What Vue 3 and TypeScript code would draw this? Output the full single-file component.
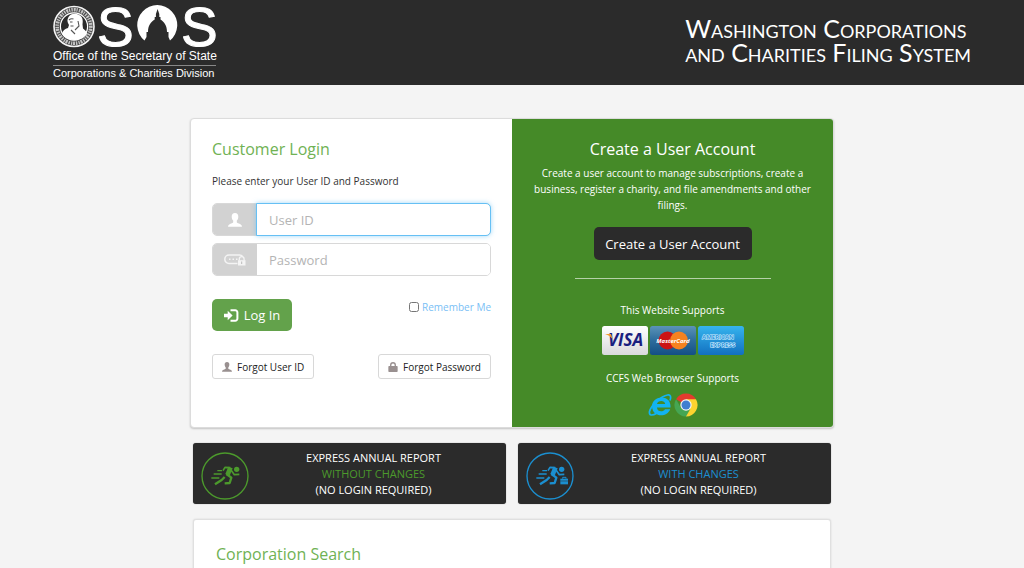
<script setup lang="ts">
import { ref } from 'vue'

interface Report {
  kind: 'without' | 'with'
  label: string
}

const userId = ref('')
const password = ref('')
const remember = ref(false)
const reports: Report[] = [
  { kind: 'without', label: 'WITHOUT CHANGES' },
  { kind: 'with', label: 'WITH CHANGES' },
]
</script>

<template>
  <div class="page">
    <header class="topbar">
      <a class="brand" href="#" aria-label="Office of the Secretary of State">
        <svg class="logo" viewBox="0 0 164 80" role="img">
          <circle cx="21" cy="26.500" r="20" fill="#4a4a4a" stroke="#f4f4f4" stroke-width="1.600" />
          <circle cx="21" cy="26.500" r="16.800" fill="none" stroke="#c4c4c4" stroke-width="3.600" stroke-dasharray="1.400 1 2 .8 1.200 1.200" />
          <circle cx="21" cy="26.500" r="13.600" fill="#2b2b2b" stroke="#fff" stroke-width="1.200" />
          <path d="M15.500 17c1.500-3.500 8-4.500 11.500-1.500 3 2 3 5.500 2.500 9l.5 4c2 1.500 4 3 4 5.500-3 4.500-8 6-13 6-5.500 0-9.500-2-12-6 .5-3.500 3-5 6-6l1-3c-2-3-2-5.500-.5-8z" fill="#fff" />
          <path d="M16 20c1.500-1.500 3-1.500 4.500-1M17 22h2.500M17.500 26h3M25 21l1 5-4 4M18 30l4 4" fill="none" stroke="#555" stroke-width="1.100" />
          <text class="big-s" x="44" y="46">S</text>
          <path d="M91.500 40.500A20 20 0 1 1 117 40.500L115.500 37V32h-1.500c0-6-2.500-10-6.500-12.500V17h-1.200V14l-1.700-5-1.700 5v3h-1.200v2.500C97.500 22 95 26 95 32h-1.500v5z" fill="#fff" />
          <text class="big-s" x="128" y="46">S</text>
          <text class="logo-line" x="0" y="60">Office of the Secretary of State</text>
          <path d="M0 65.500h163" stroke="#888" stroke-width="1" />
          <text class="logo-line small" x="0" y="77">Corporations &amp; Charities Division</text>
        </svg>
      </a>
      <h1 class="title">Washington Corporations<br />and Charities Filing System</h1>
    </header>

    <main class="content">
      <section class="account">
        <form class="login" @submit.prevent>
          <h2 class="heading">Customer Login</h2>
          <p class="hint">Please enter your User ID and Password</p>

          <div class="field active">
            <label class="addon" for="user-id" aria-label="User ID">
              <svg class="user" viewBox="0 0 14 14"><path d="M7 0c2.200 0 3.400 1.500 3.300 3.700 0 1.700-.6 3-1.500 3.900v1.500c0 .6.5.9 1.300 1.200 2 .7 3.700 1.300 3.900 3.400H0c.2-2.100 1.900-2.700 3.900-3.400.8-.3 1.300-.6 1.300-1.200V7.600C4.300 6.700 3.700 5.400 3.700 3.700 3.600 1.500 4.800 0 7 0z" /></svg>
            </label>
            <input id="user-id" v-model="userId" type="text" placeholder="User ID" />
          </div>
          <div class="field">
            <label class="addon" for="password" aria-label="Password">
              <svg class="key" viewBox="0 0 22 12">
                <path d="M13.500 9.500H5a4.200 4.200 0 0 1 0-8.400h10.500c1.500 0 2.600.6 3.200 1.500" fill="none" stroke="#f4f4f4" stroke-width="1.500" />
                <path d="M5 5.300h1.500M8.500 5.300H10M12 5.300h1.500" stroke="#f4f4f4" stroke-width="1.600" />
                <path d="M15.300 6.500V5a2.400 2.400 0 0 1 4.800 0v1.500" fill="none" stroke="#f4f4f4" stroke-width="1.300" />
                <path d="M14 6.200h7.500v5.300H14z" fill="#f4f4f4" /><path d="M17.700 7.500v2.500" stroke="#bbb" stroke-width="1" />
              </svg>
            </label>
            <input id="password" v-model="password" type="password" placeholder="Password" />
          </div>

          <div class="actions">
            <button class="btn log-in" type="submit">
              <svg class="enter" viewBox="0 0 15 13"><path d="M0 4.700h3.700V1.800L8.600 6.500 3.700 11.200V8.300H0z" fill="#fff" /><path d="M6.500 1.200h4.700a2.200 2.200 0 0 1 2.200 2.200v6.200a2.200 2.200 0 0 1-2.200 2.200H6.500" fill="none" stroke="#fff" stroke-width="2" /></svg>
              Log In
            </button>
            <label class="remember"><input v-model="remember" type="checkbox" />Remember Me</label>
          </div>

          <div class="forgot">
            <button class="btn outline" type="button">
              <svg class="mini" viewBox="0 0 14 14"><path d="M7 0c2.200 0 3.400 1.500 3.300 3.700 0 1.700-.6 3-1.500 3.900v1.500c0 .6.5.9 1.300 1.200 2 .7 3.700 1.300 3.900 3.400H0c.2-2.100 1.900-2.700 3.900-3.400.8-.3 1.300-.6 1.300-1.200V7.600C4.300 6.700 3.700 5.400 3.700 3.700 3.600 1.500 4.800 0 7 0z" /></svg>
              Forgot User ID
            </button>
            <button class="btn outline" type="button">
              <svg class="mini" viewBox="0 0 14 14"><path d="M3.800 6V4.200a3.200 3.200 0 0 1 6.400 0V6" fill="none" stroke="#999090" stroke-width="1.900" /><path d="M1.500 5.500h11a1 1 0 0 1 1 1V13a1 1 0 0 1-1 1h-11a1 1 0 0 1-1-1V6.500a1 1 0 0 1 1-1z" /></svg>
              Forgot Password
            </button>
          </div>
        </form>

        <div class="signup">
          <h2 class="heading">Create a User Account</h2>
          <p class="lead">Create a user account to manage subscriptions, create a business, register a charity, and file amendments and other filings.</p>
          <button class="btn dark" type="button">Create a User Account</button>
          <hr class="rule" />
          <p class="supports">This Website Supports</p>
          <div class="cards">
            <svg viewBox="0 0 46 29" role="img" aria-label="Visa">
              <defs><linearGradient id="visa" x1="0" y1="0" x2="0" y2="1"><stop offset="0" stop-color="#fff" /><stop offset="1" stop-color="#d9d9dc" /></linearGradient></defs>
              <rect width="46" height="29" rx="2.500" fill="url(#visa)" />
              <text class="visa" x="23.500" y="20">VISA</text>
              <path d="M3 8h6l2 6C9.500 11 6.500 9 3 8z" fill="#f29a2e" />
            </svg>
            <svg viewBox="0 0 46 29" role="img" aria-label="MasterCard">
              <defs><linearGradient id="mc" x1="0" y1="0" x2="0" y2="1"><stop offset="0" stop-color="#5b93b8" /><stop offset=".5" stop-color="#2d6c9c" /><stop offset="1" stop-color="#134f84" /></linearGradient></defs>
              <rect width="46" height="29" rx="2.500" fill="url(#mc)" />
              <circle cx="17.500" cy="14.500" r="9" fill="#cc1414" /><circle cx="29" cy="14.500" r="9" fill="#f58220" />
              <text class="mc" x="23" y="17">MasterCard</text>
            </svg>
            <svg viewBox="0 0 46 29" role="img" aria-label="American Express">
              <defs><linearGradient id="amex" x1="0" y1="0" x2="0" y2="1"><stop offset="0" stop-color="#36b4ee" /><stop offset="1" stop-color="#1270c0" /></linearGradient></defs>
              <rect width="46" height="29" rx="2.500" fill="url(#amex)" />
              <text class="amex" x="4" y="13">AMERICAN</text><text class="amex" x="12" y="21">EXPRESS</text>
            </svg>
          </div>
          <p class="supports">CCFS Web Browser Supports</p>
          <div class="browsers">
            <svg viewBox="0 0 24 24" role="img" aria-label="Internet Explorer">
              <path d="M22.500 14.500H9c.2 4.500 6 5 8 1.800h5.200C19 25 4.500 24.500 4 13.500 3.800 2.500 23.500.5 22.500 14.500zM9 11h8.200c-.3-4-7.600-4-8.200 0z" fill="#12b3f2" />
              <path d="M22 7.500c1.300-3.500.8-6-2.500-5.500C13 3 3 12.500 1.500 18.500c-.8 4.500 3 4.200 7.200 1.700" fill="none" stroke="#12b3f2" stroke-width="1.700" />
            </svg>
            <svg viewBox="0 0 24 24" role="img" aria-label="Google Chrome">
              <path d="M12 12L2.040 6.250A11.500 11.500 0 0 1 21.960 6.250z" fill="#e33b2e" />
              <path d="M12 12V6.250h9.960A11.500 11.500 0 0 1 12 23.500l-1-6z" fill="#fdd32f" />
              <path d="M2.040 6.250L7 14.900l5 2.100 4.300-1L12 23.500A11.500 11.500 0 0 1 2.040 6.250z" fill="#45a653" />
              <circle cx="12" cy="12" r="5.700" fill="#f5f5f5" /><circle cx="12" cy="12" r="4.500" fill="#3f7fd0" />
            </svg>
          </div>
        </div>
      </section>

      <nav class="reports" aria-label="Express annual reports">
        <a v-for="r in reports" :key="r.kind" href="#" class="report" :class="r.kind">
          <svg class="runner" viewBox="0 0 144 144" fill="none" stroke="currentColor" stroke-linejoin="round">
            <circle cx="72" cy="72" r="69" stroke-width="4" />
            <circle cx="107" cy="52" r="8" fill="currentColor" stroke="none" />
            <path d="M66 56l6-10 16 1" stroke-width="5" />
            <path d="M82 44l13 5-9 22-13-5z" fill="currentColor" stroke="none" />
            <path d="M90 54l10 14 15-1" stroke-width="5" />
            <path d="M76 66l15 11-5 16-15 1" stroke-width="7" />
            <path d="M71 75l-9 9-20 13" stroke-width="7" />
            <path d="M49 56h14M38 66h24M31 78h24" stroke-width="4" />
            <g v-if="r.kind === 'with'">
              <path d="M103 80h23v17h-23z" fill="currentColor" stroke="none" />
              <path d="M110 80v-4h10v4" stroke-width="3" />
              <path d="M103 87h23" stroke="#2b2b2b" stroke-width="1.500" />
            </g>
          </svg>
          <span class="report-text">EXPRESS ANNUAL REPORT<br /><em>{{ r.label }}</em><br />(NO LOGIN REQUIRED)</span>
        </a>
      </nav>

      <section class="search">
        <h2 class="heading">Corporation Search</h2>
      </section>
    </main>
  </div>
</template>

<style>
html,
body {
  margin: 0;
  background: #f4f4f4;
}
</style>

<style scoped>
* {
  box-sizing: border-box;
}
.page {
  height: 100vh;
  overflow: hidden;
  color: #333;
  font: 10px/16px "Open Sans", "Noto Sans", sans-serif;
}
.topbar {
  display: flex;
  justify-content: space-between;
  align-items: flex-start;
  height: 85px;
  padding: 0 53px;
  background: #2b2b2b;
}
.logo {
  display: block;
  width: 164px;
  height: 80px;
  overflow: visible;
  fill: #fff;
}
.big-s {
  font: 400 55px "Liberation Sans", Arial, sans-serif;
  stroke: #fff;
  stroke-width: 1px;
}
.logo-line {
  font: 400 12px "Liberation Sans", Arial, sans-serif;
}
.small {
  font-size: 11px;
}
.title {
  margin: 16px 0 0;
  color: #fff;
  font: 400 25px/24px Lato, sans-serif;
  font-variant: small-caps;
}
.content {
  width: 100%;
  max-width: 644px;
  margin: 0 auto;
  padding-top: 33px;
}
.account {
  display: grid;
  grid-template-columns: 1fr 1fr;
  height: 310px;
  overflow: hidden;
  background: #fff;
  border: 1px solid #dcdcdc;
  border-radius: 4px;
  box-shadow: 0 1px 2px #0003;
}
p {
  margin: 0;
}
.heading {
  margin: 0;
  color: #70b254;
  font-size: 16px;
  line-height: 24px;
  font-weight: 500;
}
.login {
  padding: 18px 21px;
}
.hint {
  margin: 12px 0 14px;
}
.field {
  display: flex;
  height: 33px;
  margin-bottom: 7px;
  border: 1px solid #d8d8d8;
  border-radius: 5px;
}
.addon {
  display: flex;
  width: 44px;
  align-items: center;
  justify-content: center;
  background: #d2d2d2;
  border-radius: 4px 0 0 4px;
}
.user {
  width: 14px;
  height: 14px;
  fill: #fff;
}
.key {
  width: 22px;
  height: 12px;
}
.field input {
  flex: 1;
  min-width: 0;
  padding: 0 12px;
  border: 0;
  border-radius: 0 4px 4px 0;
  outline: 0;
  background: #fff;
  font: 13px "Open Sans", sans-serif;
}
.field input::placeholder {
  color: #b4b4b4;
}
.active input {
  margin: -1px;
  border: 1px solid #66c0f4;
  border-radius: 0 5px 5px 0;
  box-shadow: 0 0 5px #66c0f499;
}
.btn {
  display: inline-flex;
  align-items: center;
  justify-content: center;
  padding: 0;
  border: 0;
  border-radius: 5px;
  font: 13px "Open Sans", sans-serif;
  color: #fff;
  white-space: nowrap;
}
.actions {
  display: flex;
  justify-content: space-between;
  align-items: flex-start;
  margin-top: 23px;
}
.log-in {
  gap: 5px;
  width: 80px;
  height: 32px;
  background: #63a24b;
}
.enter {
  width: 15px;
  height: 13px;
}
.remember {
  display: flex;
  align-items: center;
  gap: 3px;
  color: #79c0f5;
}
.remember input {
  width: 10px;
  height: 10px;
  margin: 0;
}
.forgot {
  display: flex;
  justify-content: space-between;
  margin-top: 23px;
}
.outline {
  gap: 5px;
  height: 25px;
  padding: 0 9px;
  border: 1px solid #d8d8d8;
  border-radius: 3px;
  background: #fff;
  color: #222;
  font-size: 10px;
}
.mini {
  width: 10px;
  height: 10px;
  fill: #999090;
}
.signup {
  display: flex;
  flex-direction: column;
  align-items: center;
  padding: 18px 20px;
  background: #458a28;
  color: #fff;
  text-align: center;
}
.signup .heading {
  color: #fff;
  margin-bottom: 4px;
}
.dark {
  width: 158px;
  height: 33px;
  margin: 14px 0 18px;
  background: #2b2b2b;
}
.rule {
  width: 196px;
  margin: 0 0 23px;
  border: 0;
  border-top: 1px solid #b5d1a9;
}
.cards {
  display: flex;
  gap: 2px;
  margin: 8px 0 15px;
}
.cards svg {
  width: 46px;
  height: 29px;
}
.visa {
  fill: #1a1f80;
  font: italic 700 17px "Open Sans", sans-serif;
  text-anchor: middle;
}
.mc {
  fill: #fff;
  font: italic 700 6px "Open Sans", sans-serif;
  text-anchor: middle;
}
.amex {
  fill: #2b95dc;
  stroke: #d8f0ff;
  stroke-width: 1px;
  paint-order: stroke;
  font: 700 6px "Open Sans", sans-serif;
}
.browsers {
  display: flex;
  gap: 2px;
  margin-top: 7px;
}
.browsers svg {
  width: 24px;
  height: 24px;
}
.reports {
  display: grid;
  grid-template-columns: 1fr 1fr;
  gap: 12px;
  margin: 15px 3px;
}
.report {
  display: flex;
  align-items: center;
  height: 61px;
  padding: 0 8px;
  border-radius: 3px;
  background: #2b2b2b;
  box-shadow: 0 0 1px #0008;
  color: #fff;
  font-size: 11px;
  text-decoration: none;
}
.runner {
  width: 48px;
  height: 48px;
  margin-top: 4px;
}
.without .runner,
.without em {
  color: #4c9a2c;
}
.with .runner,
.with em {
  color: #1b8fd0;
}
.report-text {
  flex: 1;
  text-align: center;
}
.report-text em {
  font-style: normal;
}
.search {
  height: 120px;
  margin: 0 3px;
  padding: 22px;
  background: #fff;
  border: 1px solid #e0e0e0;
  border-radius: 3px;
  box-shadow: 0 0 2px #0002;
}
</style>
